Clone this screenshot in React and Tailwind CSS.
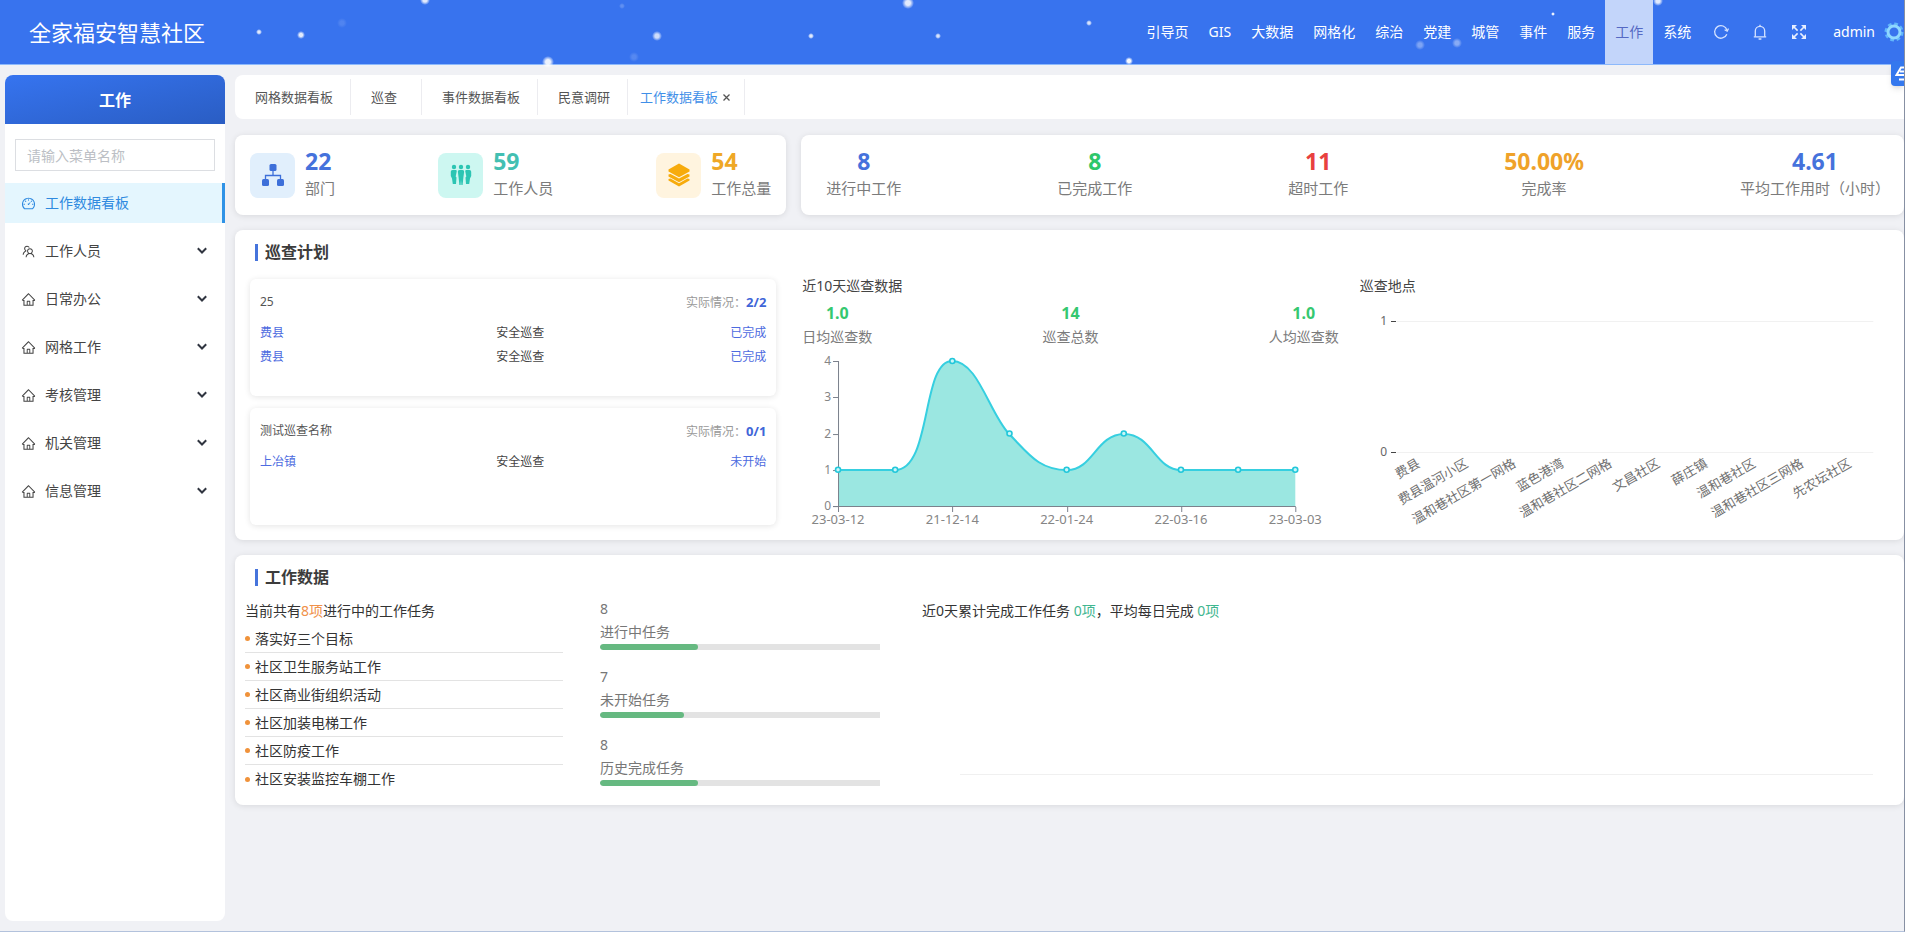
import React from "react";
import { AiOutlineDashboard, AiOutlineHome, AiOutlineTeam } from "react-icons/ai";

const NAV = ["引导页", "GIS", "大数据", "网格化", "综治", "党建", "城管", "事件", "服务", "工作", "系统"];
const MENU = ["工作人员", "日常办公", "网格工作", "考核管理", "机关管理", "信息管理"];
const TABS = ["网格数据看板", "巡查", "事件数据看板", "民意调研"];

const FLAKES = [
  [259, 32, 2, 0.85], [301, 35, 3, 0.85], [425, 0, 4, 0.85], [342, 23, 4, 0.12], [548, 62, 5, 0.9],
  [657, 36, 4, 0.75], [811, 36, 2, 0.85], [908, 3, 5, 0.85], [938, 36, 2, 0.8], [1089, 23, 2, 0.8],
  [1129, 61, 3, 0.95], [1420, 45, 4, 0.35], [1457, 43, 4, 0.4], [1553, 14, 1, 0.9], [1658, 1, 4, 0.85],
  [622, 6, 2, 0.2], [634, 57, 4, 0.15],
];

function Snow() {
  return (
    <svg className="pointer-events-none absolute left-0 top-0 z-10 h-[70px] w-[1905px]" viewBox="0 0 1905 70" aria-hidden="true">
      <defs>
        <radialGradient id="flake">
          <stop offset="0.4" stopColor="#fff" />
          <stop offset="1" stopColor="#fff" stopOpacity="0" />
        </radialGradient>
      </defs>
      {FLAKES.map(([x, y, r, o]) => (
        <circle key={x} cx={x} cy={y} r={r + 1} fill="url(#flake)" opacity={o} />
      ))}
    </svg>
  );
}

function RefreshIcon() {
  return (
    <svg className="size-4" viewBox="0 0 16 16" fill="none" stroke="currentColor" strokeWidth="1.3">
      <path d="M13.8 10.2A6.3 6.3 0 1 1 14 6.2" />
      <path d="M11.6 5.7l2.6 1.5 1.3-2.7" />
    </svg>
  );
}

function BellIcon() {
  return (
    <svg className="size-4" viewBox="0 0 16 16" fill="none" stroke="currentColor" strokeWidth="1.3">
      <path d="M3.3 12.7V7a4.7 4.7 0 0 1 9.4 0v5.7" />
      <path d="M1.8 12.8h12.4M8 .8v1.500M6.600 15h2.800" />
    </svg>
  );
}

function ExpandIcon() {
  return (
    <svg className="size-4" viewBox="0 0 16 16" fill="currentColor" stroke="currentColor" strokeWidth="1.6">
      <path stroke="none" d="M1 1h5L1 6zM15 1v5l-5-5zM1 15v-5l5 5zM15 15h-5l5-5z" />
      <path d="M3 3l3.600 3.600M13 3L9.400 6.600M3 13l3.600-3.600M13 13L9.400 9.400" />
    </svg>
  );
}

function GearIcon() {
  return (
    <svg className="size-5" viewBox="0 0 20 20" fill="none">
      <circle cx="10" cy="10" r="8" stroke="#62b7fb" strokeWidth="3" strokeDasharray="3.6 2.683" />
      <circle cx="10" cy="10" r="6" stroke="#8fd8ff" strokeWidth="3" />
    </svg>
  );
}

function SitemapIcon() {
  return (
    <svg className="size-6" viewBox="0 0 24 24" fill="#3d6fd9">
      <rect x="8.500" y="1" width="7" height="7" rx="1.500" />
      <rect x="1" y="16" width="7" height="7" rx="1.500" />
      <rect x="16" y="16" width="7" height="7" rx="1.500" />
      <path d="M12 8v4.500M4.500 16v-3.500h15V16" fill="none" stroke="#3d6fd9" strokeWidth="1.300" />
    </svg>
  );
}

function PeopleIcon() {
  return (
    <svg className="size-6" viewBox="0 0 24 24" fill="#2cc5b3">
      <circle cx="5" cy="4" r="2.200" />
      <circle cx="12" cy="4" r="2.200" />
      <circle cx="19" cy="4" r="2.200" />
      <path d="M3.600 7h3.200c1 0 1 .8.900 1.500l-1 5 .8 1-.500 6.500H3.800L3 15.500 1.800 13V9c0-1.300.6-2 1.800-2z" />
      <path d="M10.500 7h3c1.200 0 1.700.8 1.600 2l-.7 5.500-.8 7.500h-1.200l-.4-5-.4 5h-1.200l-.8-7.500L8.900 9c-.1-1.200.4-2 1.600-2z" />
      <path d="M20.400 7h-3.200c-1 0-1 .8-.9 1.500l1 5-.8 1 .5 6.500h3.200l.8-5.500 1.200-2.500V9c0-1.300-.6-2-1.800-2z" />
    </svg>
  );
}

function LayersIcon() {
  return (
    <svg className="size-6" viewBox="0 0 24 24" fill="#f7ab0c">
      <path d="M12 0.500l10.500 6v2L12 14.300 1.500 8.500v-2z" />
      <path d="M1.500 11.500l2-.6L12 15.600l8.500-4.700 2 .6v1.900L12 19.200 1.500 13.400z" />
      <path d="M1.500 16l2-.4 8.500 4.700 8.500-4.700 2 .4v1.600L12 23.500 1.500 17.600z" />
    </svg>
  );
}

function ChevronDown() {
  return (
    <svg className="size-3" viewBox="0 0 12 12" fill="none" stroke="#303540" strokeWidth="2">
      <path d="M1.800 3.300L6 7.500l4.200-4.200" />
    </svg>
  );
}

function SectionTitle({ children }) {
  return (
    <h2 className="ml-5 flex h-[18px] items-center gap-[7px] text-base font-bold leading-[18px] text-[#3c3c3c]">
      <span className="h-[17px] w-[3px] bg-[#4674dc]" />
      {children}
    </h2>
  );
}

function IconStat({ icon, tile, value, color, label }) {
  return (
    <div className="flex items-center gap-[10px]">
      <div className={"flex size-[45px] items-center justify-center rounded-lg " + tile}>{icon}</div>
      <div>
        <div className={"text-[23px] font-bold leading-[27px] " + color}>{value}</div>
        <div className="text-[15px] leading-[27px] text-[#7b7b7b]">{label}</div>
      </div>
    </div>
  );
}

function NumberStat({ value, color, label }) {
  return (
    <div className="text-center">
      <div className={"text-[23px] font-bold leading-[27px] " + color}>{value}</div>
      <div className="text-[15px] leading-[27px] text-[#7b7b7b]">{label}</div>
    </div>
  );
}

function PlanCard({ name, ratio, rows }) {
  return (
    <div className="min-h-[117px] rounded-md bg-white px-[10px] pt-[13px] text-xs shadow-[0_1px_6px_rgba(0,0,0,0.11)]">
      <div className="mb-2 flex justify-between leading-5">
        <span className="text-[#555]">{name}</span>
        <span className="text-[#999]">
          实际情况：<b className="text-[13px] text-[#3f66d8]">{ratio}</b>
        </span>
      </div>
      {rows.map(([place, kind, state], i) => (
        <div key={i} className="grid grid-cols-[7fr_5fr_3fr] leading-6">
          <span className="text-[#4d6be0]">{place}</span>
          <span className="text-[#444]">{kind}</span>
          <span className="text-right text-[#4d6be0]">{state}</span>
        </div>
      ))}
    </div>
  );
}

const AREA_VALUES = [1, 1, 4, 2, 1, 2, 1, 1, 1];
const AREA_DATES = ["23-03-12", "21-12-14", "22-01-24", "22-03-16", "23-03-03"];
const CURVE =
  "M36 121H93C130 121 119 12 150 12C176 12 187 64 207 85C225 103 236 121 265 121C291 121 294 85 322 85C350 85 353 121 379 121H493";

function AreaChart() {
  return (
    <svg className="block h-auto w-full" viewBox="0 0 536 185" role="img" aria-label="近10天巡查数据">
      <path d={CURVE + "V157.500H36Z"} fill="#9be7e1" />
      <path d="M36.500 12V158M31 157.500H493.500" stroke="#7b818c" fill="none" />
      {[0, 1, 2, 3, 4].map((v) => (
        <g key={v}>
          <path d="M31 0.500H36" stroke="#7b818c" transform={`translate(0 ${Math.round(157 - v * 36.250)})`} />
          <text x="29" y={161 - v * 36.250} textAnchor="end" fontSize="12" fill="#858585">{v}</text>
        </g>
      ))}
      {AREA_DATES.map((d, i) => (
        <g key={d}>
          <path d="M0.500 158V163" stroke="#7b818c" transform={`translate(${Math.round(36 + i * 114.250)} 0)`} />
          <text x={36 + i * 114.250} y="175" textAnchor="middle" fontSize="13" fill="#858585">{d}</text>
        </g>
      ))}
      <path d={CURVE} fill="none" stroke="#36cfe0" strokeWidth="2" />
      {AREA_VALUES.map((v, i) => (
        <circle key={i} cx={36 + i * 57.120} cy={157 - v * 36.250} r="2.500" fill="#c9f6f8" stroke="#22c7da" strokeWidth="1.600" />
      ))}
    </svg>
  );
}

const PLACES = ["费县", "费县温河小区", "温和巷社区第一网格", "蓝色港湾", "温和巷社区二网格", "文昌社区", "薛庄镇", "温和巷社区", "温和巷社区三网格", "先农坛社区"];

function PlaceChart() {
  return (
    <svg className="block h-auto w-full" viewBox="0 0 544 238" role="img" aria-label="巡查地点">
      <path d="M37 25.500H513M37 156.500H513" stroke="#f1f1f1" />
      <path d="M31 25.500H36M31 156.500H36" stroke="#444" />
      <text x="27" y="29" textAnchor="end" fontSize="12" fill="#666">1</text>
      <text x="27" y="160" textAnchor="end" fontSize="12" fill="#666">0</text>
      {PLACES.map((p, i) => (
        <text key={p} textAnchor="end" fontSize="13" fill="#707070" transform={`translate(${61 + i * 47.900} 170) rotate(-30)`}>
          {p}
        </text>
      ))}
    </svg>
  );
}

const TASKS = ["落实好三个目标", "社区卫生服务站工作", "社区商业街组织活动", "社区加装电梯工作", "社区防疫工作", "社区安装监控车棚工作"];
const PROGRESS = [
  { n: 8, label: "进行中任务", pct: 35 },
  { n: 7, label: "未开始任务", pct: 30 },
  { n: 8, label: "历史完成任务", pct: 35 },
];

const PANEL = "rounded-lg bg-white shadow-[0_1px_6px_rgba(0,0,0,0.1)]";

export default function App() {
  return (
    <div className="relative flex min-h-screen flex-col overflow-hidden border-b border-r border-b-[#b3c2dc] border-r-[#8790a3] bg-[#f0f1f5] font-['Noto_Sans','Noto_Sans_CJK_SC',sans-serif] text-sm text-[#333]">
      <Snow />
      <header className="flex h-[65px] items-center justify-between border-b border-[#8db9fb] bg-[#3873ee] pl-[29px] text-white">
        <h1 className="text-[22px] leading-8">全家福安智慧社区</h1>
        <div className="flex h-full items-center">
          <nav className="flex h-full">
            {NAV.map((n) => (
              <a key={n} href="#" className={"flex items-center px-[10px] " + (n === "工作" ? "bg-[#c3d5fa] text-[#5569c4]" : "")}>
                {n}
              </a>
            ))}
          </nav>
          <button aria-label="刷新" className="flex w-[39px] justify-center text-[#d5e3ff]"><RefreshIcon /></button>
          <button aria-label="通知" className="flex w-[39px] justify-center text-[#d5e3ff]"><BellIcon /></button>
          <button aria-label="全屏" className="flex w-[39px] justify-center text-[#e6eeff]"><ExpandIcon /></button>
          <button className="ml-[15px]">admin</button>
          <button aria-label="设置" className="ml-[9px]"><GearIcon /></button>
        </div>
      </header>

      <button aria-label="工具" className="absolute right-0 top-[61px] z-20 flex h-[25px] w-[13px] items-center overflow-hidden rounded-l bg-[#3478ee] pl-1 shadow-md">
        <svg className="h-4 w-[18px] shrink-0" viewBox="0 0 18 16" fill="none" stroke="#fff" strokeWidth="2">
          <path d="M13 1.500H6L1.500 9H14M5 5.500h8M4 13.500h10" />
        </svg>
      </button>

      <div className="flex grow gap-[10px] pb-[10px] pl-[5px] pt-[10px]">
        <aside className="w-[220px] shrink-0 overflow-hidden rounded-lg bg-white">
          <div className="flex h-[49px] items-center justify-center bg-linear-to-br from-[#3674f0] to-[#2a5dc3] text-base font-bold text-white">工作</div>
          <div className="px-[10px] pb-3 pt-[15px]">
            <input
              aria-label="请输入菜单名称"
              placeholder="请输入菜单名称"
              className="block h-8 w-full border border-[#dcdee2] px-[11px] text-sm outline-none placeholder:text-[#bcbfc5]"
            />
          </div>
          <nav className="flex flex-col gap-2">
            <a href="#" className="flex h-10 items-center gap-[9px] border-r-3 border-[#2f92e6] bg-[#e4f6fe] pl-4 text-[#2f8ae0]">
              <AiOutlineDashboard className="size-[15px]" />
              工作数据看板
            </a>
            {MENU.map((m, i) => (
              <a key={m} href="#" className="flex h-10 items-center gap-[9px] pl-4 pr-[17px] text-[#444]">
                {i === 0 ? <AiOutlineTeam className="size-[15px]" /> : <AiOutlineHome className="size-[15px]" />}
                <span className="grow">{m}</span>
                <ChevronDown />
              </a>
            ))}
          </nav>
        </aside>

        <main className="flex min-w-0 grow flex-col">
          <div className="flex h-11 items-stretch rounded-l-lg bg-white py-1 text-[13px] text-[#555]">
            {TABS.map((t) => (
              <button key={t} className="min-w-[71px] border-r border-[#ececf0] pl-5 pr-[17px] text-left">{t}</button>
            ))}
            <button className="flex items-center gap-1 border-r border-[#ececf0] pl-3 pr-[13px] text-[#3f8fe8]">
              工作数据看板
              <svg className="size-[9px]" viewBox="0 0 9 9" stroke="#555" strokeWidth="1.300"><path d="M1.500 1.500l6 6M7.500 1.500l-6 6" /></svg>
            </button>
          </div>

          <div className="mt-4 grid grid-cols-[1fr_2fr] gap-[15px]">
            <section className={"flex h-20 items-center justify-between px-[15px] " + PANEL}>
              <IconStat icon={<SitemapIcon />} tile="bg-[#e1effc]" value="22" color="text-[#4572dc]" label="部门" />
              <IconStat icon={<PeopleIcon />} tile="bg-[#cdf7f1]" value="59" color="text-[#43bfb2]" label="工作人员" />
              <IconStat icon={<LayersIcon />} tile="bg-[#fff4df]" value="54" color="text-[#efa826]" label="工作总量" />
            </section>
            <section className={"flex h-20 items-center justify-between pl-[25px] pr-[14px] " + PANEL}>
              <NumberStat value="8" color="text-[#4572dc]" label="进行中工作" />
              <NumberStat value="8" color="text-[#2ec76a]" label="已完成工作" />
              <NumberStat value="11" color="text-[#e8413f]" label="超时工作" />
              <NumberStat value="50.00%" color="text-[#efa22a]" label="完成率" />
              <NumberStat value="4.61" color="text-[#4572dc]" label="平均工作用时（小时）" />
            </section>
          </div>

          <section className={"mt-[15px] pt-[13px] " + PANEL}>
            <SectionTitle>巡查计划</SectionTitle>
            <div className="grid grid-cols-3 pt-px">
              <div className="flex flex-col gap-3 px-[15px] pb-[15px] pt-[17px]">
                <PlanCard name="25" ratio="2/2" rows={[["费县", "安全巡查", "已完成"], ["费县", "安全巡查", "已完成"]]} />
                <PlanCard name="测试巡查名称" ratio="0/1" rows={[["上冶镇", "安全巡查", "未开始"]]} />
              </div>
              <div className="pl-[11px] pr-[9px] pt-[14px]">
                <h3 className="leading-5 text-[#444]">近10天巡查数据</h3>
                <div className="mt-[5px] flex justify-between text-center leading-6 text-[#7b7b7b]">
                  {[["1.0", "日均巡查数"], ["14", "巡查总数"], ["1.0", "人均巡查数"]].map(([v, l]) => (
                    <div key={l}>
                      <div className="text-base font-bold leading-6 text-[#35c870]">{v}</div>
                      <div>{l}</div>
                    </div>
                  ))}
                </div>
                <AreaChart />
              </div>
              <div className="pl-3 pt-[14px]">
                <h3 className="leading-5 text-[#444]">巡查地点</h3>
                <PlaceChart />
              </div>
            </div>
          </section>

          <section className={"mt-[15px] pb-3 pt-[13px] " + PANEL}>
            <SectionTitle>工作数据</SectionTitle>
            <div className="grid grid-cols-[357fr_312fr_1000fr] pt-[11px]">
              <div className="pl-[10px] pr-[29px]">
                <p className="h-7 leading-7">
                  当前共有<span className="text-[#f0914a]">8项</span>进行中的工作任务
                </p>
                <ul>
                  {TASKS.map((t) => (
                    <li key={t} className="flex h-7 items-center gap-[5px] border-b border-[#e3e3e3] last:border-b-0">
                      <span className="size-[5px] rounded-full bg-[#f0923a]" />
                      {t}
                    </li>
                  ))}
                </ul>
              </div>
              <div className="flex flex-col gap-[15px] pl-2 pr-6 leading-[23px] text-[#777]">
                {PROGRESS.map((p) => (
                  <div key={p.label}>
                    <div>{p.n}</div>
                    <div>{p.label}</div>
                    <div className="mt-px h-[6px] overflow-hidden rounded-r-sm rounded-l-full bg-[#e3e3e3]">
                      <div className="h-full rounded-full bg-[#66b981]" style={{ width: p.pct + "%" }} />
                    </div>
                  </div>
                ))}
              </div>
              <div className="pl-[18px] pr-[31px]">
                <p className="leading-7">
                  近0天累计完成工作任务 <span className="text-[#3fb68f]">0项</span>，平均每日完成 <span className="text-[#3fb68f]">0项</span>
                </p>
                <div className="ml-[38px] h-[150px] border-b border-[#f0f0f0]" />
              </div>
            </div>
          </section>
        </main>
      </div>
    </div>
  );
}
